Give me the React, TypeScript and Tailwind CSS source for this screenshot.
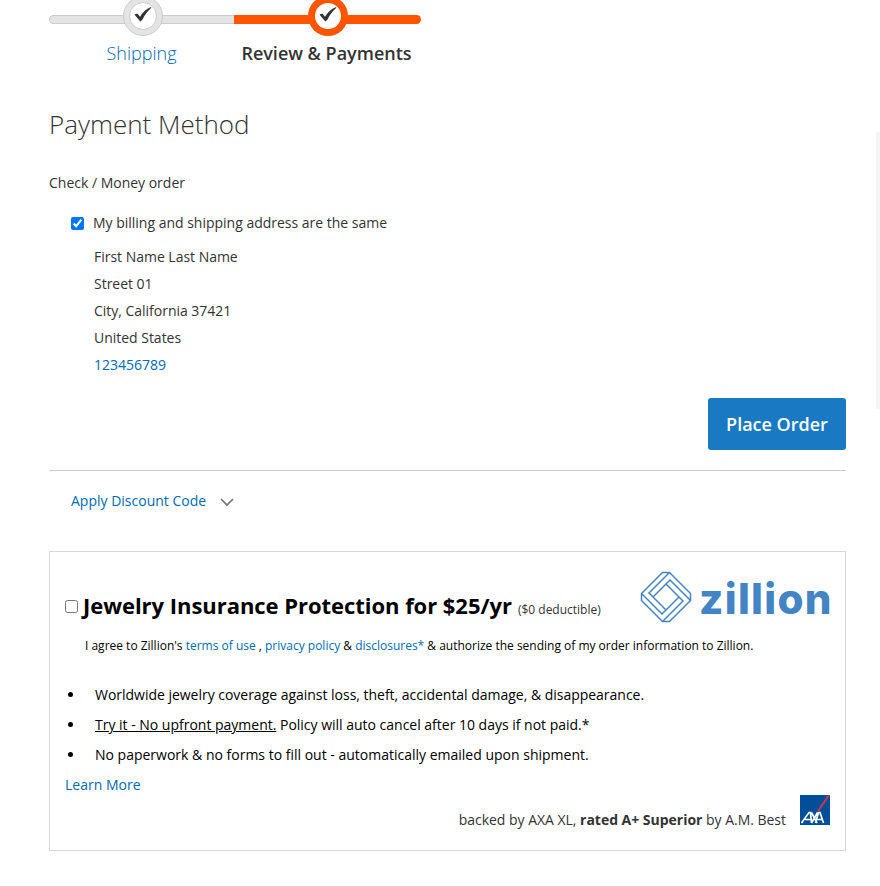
import React from "react";

const Check = ({ className }: { className: string }) => (
  <svg className={"absolute " + className} width="18" height="17" viewBox="0 0 18 17">
    <path d="M.6 8.8 C2 7.4 3.6 7.3 4.8 9.3 L6 10.8 C8.6 6.3 12 3 17 1 L17.3 1.8 C13.4 5.3 10.8 8.8 8.4 13.8 L6.3 15.6 Z" fill="#333" />
  </svg>
);

// One arm of the interlocking square: outer edge with its cut corner, middle edge, inner edge.
const ARM = "M1.5 22.5 L22.5 1.5 H29.5 L8.5 22.5 M13 26 L30 9";

const ZillionMark = () => (
  <svg width="52" height="52" viewBox="0 0 52 52" fill="none" stroke="#4284c4" strokeWidth="1.5" strokeLinejoin="round">
    {[0, 90, 180, 270].map((angle) => (
      <path key={angle} d={ARM} transform={`rotate(${angle} 26 26)`} />
    ))}
  </svg>
);

const ZillionWord = () => (
  <span className="mt-px block h-[52px] w-[131px] whitespace-nowrap text-[42px] font-extrabold leading-[54px] tracking-[1.3px] text-[#4284c4] [font-family:Inter,sans-serif]">
    zillion
  </span>
);

export default function App() {
  return (
    <main className="relative h-[886px] w-[880px] overflow-hidden bg-white pl-[49px] text-[14px] text-[#333] [font-family:'Open_Sans','Noto_Sans',sans-serif]">
      <div className="absolute right-0 top-[132px] h-[277px] w-[4px] bg-[#f5f5f5]" />
      <div className="flex h-[70px]">
        <div className="relative w-[185px]">
          <div className="mt-[15px] h-[9px] rounded-l-md border border-r-0 border-[#ccc] bg-[#e4e4e4]" />
          <div className="absolute left-[74px] top-[-4px] size-[40px] rounded-full border border-[#ccc] bg-[#e4e4e4]">
            <div className="m-[5px] size-[28px] rounded-full border border-[#ccc] bg-white" />
            <Check className="left-[10px] top-[9px]" />
          </div>
          <div className="mt-[17px] text-center text-[18px] font-light leading-[25px] text-[#006bb4]">Shipping</div>
        </div>
        <div className="relative w-[187px]">
          <div className="mt-[15px] h-[9px] rounded-r-md bg-[#ff5501]" />
          <div className="absolute left-[74px] top-[-4px] size-[40px] rounded-full bg-[#ff5501] p-[7px]">
            <div className="size-[26px] rounded-full bg-white" />
            <Check className="left-[11px] top-[10px]" />
          </div>
          <div className="mr-[2px] mt-[17px] text-center text-[18px] font-semibold leading-[25px]">Review &amp; Payments</div>
        </div>
      </div>
      <h1 className="mt-[36px] h-[36px] text-[26px] font-light leading-[36px]">Payment Method</h1>
      <p className="mt-[31px] leading-[20px] tracking-[-0.01px]">Check / Money order</p>
      <label className="ml-[22px] mt-[20px] flex h-[20px] items-center">
        <input type="checkbox" defaultChecked className="mr-[9px] size-[13px]" />
        <span className="mb-[2px] tracking-[-0.01px]">My billing and shipping address are the same</span>
      </label>
      <address className="ml-[45px] mt-[10px] not-italic leading-[27px] tracking-[-0.02px]">
        First Name Last Name<br />Street 01<br />City, California 37421<br />United States<br />
        <a className="text-[#006bb4]">123456789</a>
      </address>
      <section className="w-[797px]">
        <button className="ml-auto mt-[20px] block h-[52px] w-[138px] rounded-[3px] bg-[#1979c3] text-[18px] font-semibold text-white">Place Order</button>
        <hr className="mt-[20px] border-0 border-t border-[#ccc]" />
        <div className="ml-[22px] mt-[20px] flex h-[20px] items-center text-[#006bb4]">
          <span className="mb-[2px]">Apply Discount Code</span>
          <svg className="ml-[14px] mt-[2px]" width="14" height="9" viewBox="0 0 14 9"><path d="M1 1 L7 7 L13 1" fill="none" stroke="#757575" strokeWidth="1.7" /></svg>
        </div>
        <div className="mt-[40px] h-[300px] border border-[#d6d6d6] px-[15px] text-black">
          <div className="flex h-[84px] justify-between">
            <div className="mt-[42px] flex h-[26px] items-center whitespace-nowrap">
              <input type="checkbox" className="mb-[2px] mr-[5px] size-[13px]" />
              <strong className="mb-[5px] text-[22px] font-bold leading-[30px] tracking-[-0.04px]">Jewelry Insurance Protection for $25/yr</strong>
              <span className="ml-[6px] mt-[6px] text-[12px] text-[#333]">($0 deductible)</span>
            </div>
            <div className="mt-[19px] flex gap-[7px]">
              <ZillionMark />
              <ZillionWord />
            </div>
          </div>
          <p className="ml-[20px] text-[12px] leading-[20px] tracking-[-0.005px]">I agree to Zillion's <a className="text-[#006bb4]">terms of use</a> , <a className="text-[#006bb4]">privacy policy</a> &amp; <a className="text-[#006bb4]">disclosures*</a> &amp; authorize the sending of my order information to Zillion.</p>
          <ul className="mt-[24px] list-disc pl-[20px] leading-[30px]">
            <li className="pl-[10px] tracking-[-0.02px]">Worldwide jewelry coverage against loss, theft, accidental damage, &amp; disappearance.</li>
            <li className="pl-[10px] tracking-[-0.01px]"><u>Try it - No upfront payment.</u> Policy will auto cancel after 10 days if not paid.*</li>
            <li className="pl-[10px]">No paperwork &amp; no forms to fill out - automatically emailed upon shipment.</li>
          </ul>
          <a className="block leading-[30px] text-[#006bb4]">Learn More</a>
          <div className="mt-[-5px] flex h-[30px] justify-end text-[#333]">
            <span className="mt-[15px] leading-[20px] tracking-[-0.02px]">backed by AXA XL, <b>rated A+ Superior</b> by A.M. Best</span>
            <svg className="ml-[14px]" width="30" height="30" viewBox="0 0 30 30">
              <rect width="30" height="30" fill="#004f98" />
              <path d="M18 16 L29 0" stroke="#e2323c" strokeWidth="1.7" />
              <path d="M1.5 28 L9 17.500 H10.500 L11.500 28 M5 24.500 H11 M11.500 17.500 L17 28 M17.500 17.500 L11.500 28 M15.500 28 L18.500 17.500 H20 L23.500 28 M17 24.500 H22" fill="none" stroke="white" strokeWidth="1.7" />
            </svg>
          </div>
        </div>
      </section>
    </main>
  );
}
